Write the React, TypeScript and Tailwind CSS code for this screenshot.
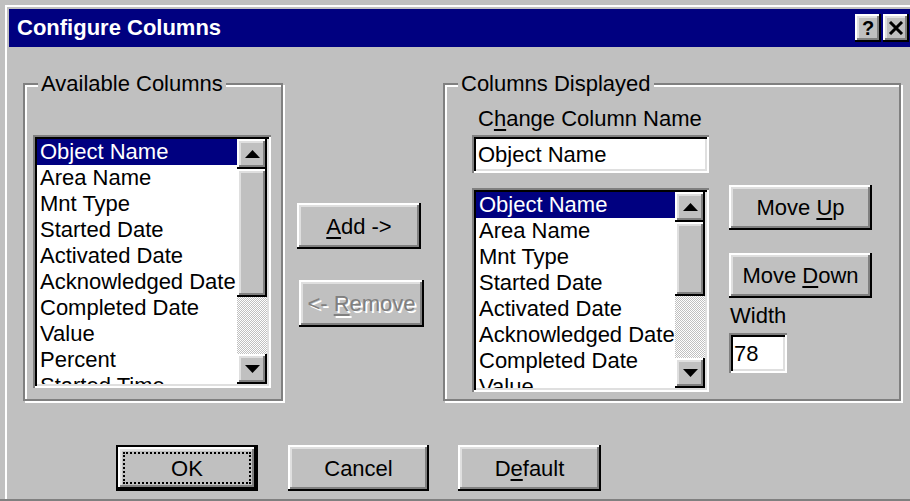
import React from "react";

// Classic 3D bevels
const RAISED =
  "shadow-[inset_-2px_-2px_0_#000000,inset_2px_2px_0_#ffffff,inset_-4px_-4px_0_#808080,inset_4px_4px_0_#dfdfdf]";
const SUNKEN =
  "shadow-[inset_2px_2px_0_#808080,inset_-2px_-2px_0_#ffffff,inset_4px_4px_0_#000000,inset_-4px_-4px_0_#dfdfdf]";

function U({ children }: { children: React.ReactNode }) {
  return <span className="underline decoration-2 underline-offset-[3px]">{children}</span>;
}

function Arrow({ down }: { down?: boolean }) {
  return (
    <svg width="15" height="8" viewBox="0 0 15 8">
      <polygon points={down ? "0,0 15,0 7.5,8" : "7.5,0 15,8 0,8"} fill="#000" />
    </svg>
  );
}

function Button({
  children,
  className,
}: {
  children: React.ReactNode;
  className: string;
}) {
  return (
    <div className={`flex items-center justify-center bg-[#c0c0c0] text-black ${RAISED} ${className}`}>
      {children}
    </div>
  );
}

function Group({
  label,
  className,
  children,
}: {
  label: string;
  className: string;
  children: React.ReactNode;
}) {
  return (
    <div
      className={`relative border-2 border-[#808080] shadow-[inset_2px_2px_0_#ffffff,2px_2px_0_#ffffff] ${className}`}
    >
      <span className="absolute -top-[14px] left-[13px] bg-[#c0c0c0] px-[3px] leading-[26px]">{label}</span>
      {children}
    </div>
  );
}

function ListBox({
  items,
  className,
  thumb,
  track,
}: {
  items: string[];
  className: string;
  thumb: string;
  track: string;
}) {
  return (
    <div className={`flex bg-white p-[4px] ${SUNKEN} ${className}`}>
      <div className="flex-1 overflow-hidden">
        {items.map((it, i) => (
          <div
            key={it}
            className={`h-[26px] whitespace-nowrap pl-[3px] text-[22px] leading-[25px] ${
              i === 0 ? "bg-[#000080] text-white" : "text-black"
            }`}
          >
            {it}
          </div>
        ))}
      </div>
      <div className="flex w-[30px] flex-col">
        <div className={`flex h-[30px] items-center justify-center bg-[#c0c0c0] ${RAISED}`}>
          <Arrow />
        </div>
        <div className={`bg-[#c0c0c0] ${RAISED} ${thumb}`} />
        <div
          className={`bg-[image:repeating-conic-gradient(#c0c0c0_0_25%,#ffffff_0_50%)] bg-[length:2px_2px] ${track}`}
        />
        <div className={`flex h-[30px] items-center justify-center bg-[#c0c0c0] ${RAISED}`}>
          <Arrow down />
        </div>
      </div>
    </div>
  );
}

const COLUMNS = [
  "Object Name",
  "Area Name",
  "Mnt Type",
  "Started Date",
  "Activated Date",
  "Acknowledged Date",
  "Completed Date",
  "Value",
  "Percent",
  "Started Time",
];

export default function App() {
  return (
    <div className="h-[501px] w-[910px] overflow-hidden border-b-2 border-[#808080] bg-[#c0c0c0] font-['Liberation_Sans',Arial,sans-serif] text-[22px] text-black">
      <div className="h-full pl-[5px] pt-[5px]">
        <div className="h-full border-l-2 border-t-2 border-white pl-[2px] pt-[2px]">
          {/* Title bar */}
          <div className="flex h-[38px] items-center bg-[#000080] pl-[8px]">
            <span className="text-[22px] font-bold leading-[26px] text-white">Configure Columns</span>
            <div className="ml-auto flex gap-[2px] pr-[1px]">
              <div
                className={`flex h-[28px] w-[26px] items-center justify-center bg-[#c0c0c0] text-[20px] font-bold leading-none ${RAISED}`}
              >
                ?
              </div>
              <div className={`flex h-[28px] w-[26px] items-center justify-center bg-[#c0c0c0] ${RAISED}`}>
                <svg width="16" height="14" viewBox="0 0 16 14">
                  <path d="M2 1 L14 13 M14 1 L2 13" stroke="#000" strokeWidth="3" />
                </svg>
              </div>
            </div>
          </div>

          {/* Dialog body */}
          <div className="ml-[14px] mt-[36px] flex items-start">
            <Group label="Available Columns" className="h-[318px] w-[260px] pl-[8px] pt-[50px]">
              <ListBox
                items={COLUMNS}
                className="h-[253px] w-[238px]"
                thumb="h-[128px]"
                track="h-[57px]"
              />
            </Group>

            <div className="ml-[14px] flex w-[146px] flex-col items-start">
              <Button className="mt-[120px] h-[46px] w-[124px]">
                <span>
                  <U>A</U>dd -&gt;
                </span>
              </Button>
              <Button className="ml-[2px] mt-[31px] h-[47px] w-[125px]">
                <span className="text-[#808080] [text-shadow:2px_2px_0_#ffffff]">
                  &lt;- <U>R</U>emove
                </span>
              </Button>
            </div>

            <Group label="Columns Displayed" className="h-[318px] w-[458px] pl-[27px] pt-[21px]">
              <div className="ml-[6px] leading-[26px]">
                C<U>h</U>ange Column Name
              </div>
              <div className={`mt-[3px] flex h-[38px] w-[237px] items-center bg-white pl-[6px] ${SUNKEN}`}>
                Object Name
              </div>
              <div className="mt-[12px] flex items-start">
                <ListBox
                  items={COLUMNS.slice(0, 8)}
                  className="mt-[3px] h-[204px] w-[237px]"
                  thumb="h-[74px]"
                  track="h-[62px]"
                />
                <div className="ml-[20px] flex flex-col">
                  <Button className="h-[45px] w-[143px]">
                    <span>
                      Move <U>U</U>p
                    </span>
                  </Button>
                  <Button className="mt-[23px] h-[45px] w-[143px]">
                    <span>
                      Move <U>D</U>own
                    </span>
                  </Button>
                  <div className="ml-[1px] mt-[5px] leading-[26px]">Width</div>
                  <div className={`mt-[4px] flex h-[40px] w-[58px] items-center bg-white pl-[5px] ${SUNKEN}`}>
                    78
                  </div>
                </div>
              </div>
            </Group>
          </div>

          {/* Dialog buttons */}
          <div className="ml-[107px] mt-[44px] flex">
            <div className="h-[46px] w-[142px] border-2 border-black">
              <div className={`flex h-full w-full items-center justify-center bg-[#c0c0c0] p-[5px] ${RAISED}`}>
                <div className="flex h-full w-full items-center justify-center border-2 border-dotted border-black">
                  OK
                </div>
              </div>
            </div>
            <Button className="ml-[30px] h-[46px] w-[141px]">Cancel</Button>
            <Button className="ml-[29px] h-[46px] w-[143px]">
              <span>
                D<U>e</U>fault
              </span>
            </Button>
          </div>
        </div>
      </div>
    </div>
  );
}
